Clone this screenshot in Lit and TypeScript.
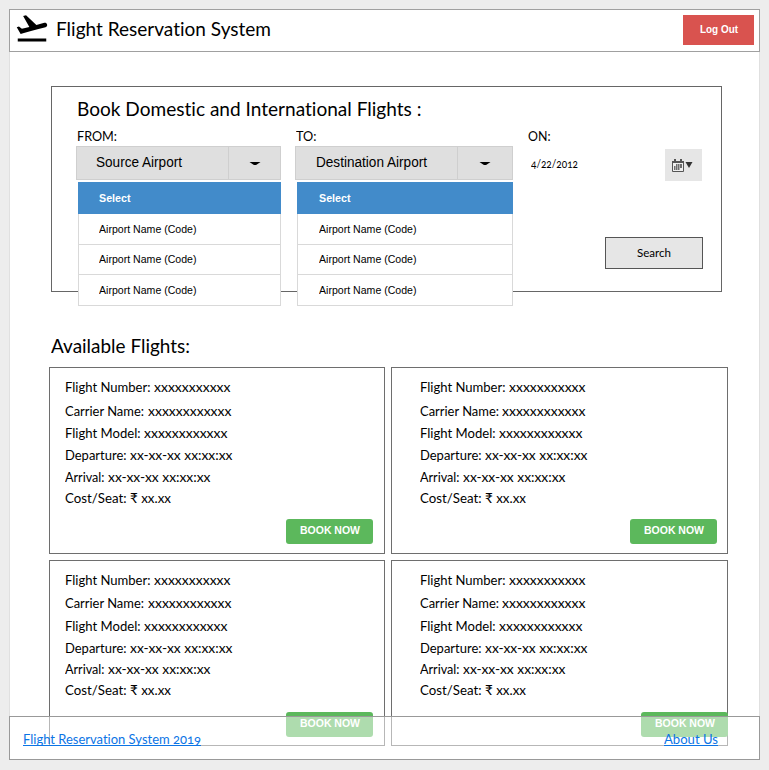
import { LitElement, html, css } from "lit";
import { customElement, property, query } from "lit/decorators.js";

/** A single line of text, condensed or widened to a set width. */
@customElement("fit-text")
class FitText extends LitElement {
  @property({ type: Number }) w = 0;
  @query(".t") span!: HTMLElement;
  static styles = css`
    :host { display: block; white-space: pre; flex: none; }
    .t { display: inline-block; transform-origin: 0 50%; vertical-align: top; }
  `;
  updated() {
    this.style.width = this.w + "px";
    const natural = this.span.getBoundingClientRect().width;
    if (natural) this.span.style.transform = `scaleX(${this.w / natural})`;
  }
  render() {
    return html`<span class="t"><slot></slot></span>`;
  }
}

@customElement("airport-select")
class AirportSelect extends LitElement {
  @property() label = "";
  @property({ type: Number }) labelWidth = 0;
  static styles = css`
    :host { display: block; position: relative; font-family: "Liberation Sans", Arial, sans-serif; }
    .box { display: flex; height: 34px; box-sizing: border-box; background: #dfdfdf; border: 1px solid #cfcfcf; }
    .label { flex: 1; font-size: 14px; line-height: 30px; padding-left: var(--label-pad, 19px); }
    .arrow { width: var(--arrow, 51px); border-left: 1px solid #cfcfcf; display: flex; align-items: center; justify-content: center; }
    .menu { position: absolute; left: 2px; right: 0; top: 36px; z-index: 2; font-size: 11px; }
    .opt { box-sizing: border-box; height: 31px; line-height: 30px; background: #fff; border: 1px solid #d9d9d9; border-top: 0; padding-left: var(--opt-pad, 19.500px); }
    .opt.second { height: 30px; line-height: 29px; }
    .opt.sel { height: 32px; line-height: 32px; background: #428bca; color: #fff; font-weight: bold; border-color: #428bca; border-bottom: 0; }
  `;
  render() {
    return html`
      <div class="box">
        <div class="label"><fit-text .w=${this.labelWidth}>${this.label}</fit-text></div>
        <div class="arrow"><svg width="12" height="5" viewBox="0 0 12 5"><path d="M0.5 1H11.5L7.5 3.700Q6 4.500 4.500 3.700Z" /></svg></div>
      </div>
      <div class="menu">
        <div class="opt sel"><fit-text .w=${31.5}>Select</fit-text></div>
        <div class="opt"><fit-text .w=${97.5}>Airport Name (Code)</fit-text></div>
        <div class="opt second"><fit-text .w=${97.5}>Airport Name (Code)</fit-text></div>
        <div class="opt"><fit-text .w=${97.5}>Airport Name (Code)</fit-text></div>
      </div>`;
  }
}

const details: [string, number, string, number][] = [
  ["Flight Number:", 85.5, "xxxxxxxxxxx", 76.5],
  ["Carrier Name:", 79, "xxxxxxxxxxxx", 83.5],
  ["Flight Model:", 75.5, "xxxxxxxxxxxx", 83.5],
  ["Departure:", 61.5, "xx-xx-xx xx:xx:xx", 102.5],
  ["Arrival:", 39.5, "xx-xx-xx xx:xx:xx", 102.5],
  ["Cost/Seat:", 61.5, "₹ xx.xx", 41],
];

@customElement("flight-card")
class FlightCard extends LitElement {
  static styles = css`
    :host { display: flex; flex-direction: column; box-sizing: border-box; height: 187px; border: 1px solid #6e6e6e; padding: 9px 11px 9px 15px; background: #fff; font-size: 14px; line-height: 20px; }
    .rows { display: grid; grid-template-rows: var(--rows, 24px 22px 22px 22px 21px 20px); }
    .row { display: flex; gap: 3.500px; }
    .book { align-self: flex-end; margin-top: auto; margin-right: var(--book-shift, 0px); width: 87px; height: 25px; background: #5cb85c; border: 0; border-radius: 3px; padding: 0 0 2px 14px; box-sizing: border-box; color: #fff; font: bold 11px/23px "Liberation Sans", Arial, sans-serif; text-align: left; display: block; }
  `;
  render() {
    return html`
      <div class="rows">
        ${details.map(([k, kw, v, vw]) => html`
          <div class="row"><fit-text .w=${kw}>${k}</fit-text><fit-text .w=${vw}>${v}</fit-text></div>`)}
      </div>
      <button class="book"><fit-text .w=${60}>BOOK NOW</fit-text></button>`;
  }
}

@customElement("app-root")
class AppRoot extends LitElement {
  static styles = css`
    :host { display: block; box-sizing: border-box; height: 770px; padding: 9px; background: #ededed; color: #000; font-family: Lato, "Noto Sans", sans-serif; font-variant-ligatures: none; overflow: hidden; }
    .sheet { position: relative; width: 751px; height: 751px; background: #fff; box-shadow: inset 0 0 0 1px #e0e0e0; }
    header { display: flex; height: 43px; box-sizing: border-box; border: 1px solid #a0a0a0; background: #fff; padding: 0 5px 0 4px; align-items: flex-start; }
    .title { font-size: 20px; line-height: 24px; margin: 6px 0 0 5.500px; }
    .plane { display: block; width: 36px; height: 36px; }
    .logout { margin: 5px 0 0 auto; width: 71px; height: 30px; box-sizing: border-box; border: 0; background: #d9534f; color: #fff; font: bold 11px/28px "Liberation Sans", Arial, sans-serif; padding: 0 0 2px 16.500px; text-align: left; }
    .panel { box-sizing: border-box; margin: 34px 0 0 42px; width: 671px; height: 206px; border: 1px solid #666; padding: 9px 19px 22px 24px; display: flex; flex-direction: column; }
    .h { font-size: 20px; line-height: 24px; }
    .book { margin-left: 0.500px; }
    .fields { display: grid; grid-template-columns: 205px 218px 1fr; column-gap: 14px; margin-top: 6px; }
    .cap { font-size: 14px; line-height: 20px; margin-left: 0.700px; }
    .to { --label-pad: 20px; --arrow: 54px; --opt-pad: 21px; }
    .date { display: flex; justify-content: space-between; font-size: 11px; line-height: 30px; font-variant-numeric: oldstyle-nums; padding: 3px 0 0 4px; }
    .cal { width: 37px; height: 32px; background: #e6e6e6; border: 0; padding: 0 0 0 7px; display: flex; align-items: center; gap: 1px; }
    .search { align-self: flex-end; margin: auto -1px 0 0; width: 98px; height: 32px; box-sizing: border-box; border: 1px solid #555; background: #e6e6e6; padding: 0 0 0 31px; font: 12px/28px Lato, "Noto Sans", sans-serif; text-align: left; }
    .avail { margin: 41px 0 0 42px; }
    .cards { display: grid; grid-template-columns: 336px 337px; gap: 6px; margin: 10px 0 0 40px; }
    .right { padding-left: 27.500px; padding-right: 10px; }
    .low { --rows: 23px 23px 22px 21px 21px 20px; height: 186px; padding-bottom: 8px; }
    .low.right { --book-shift: -10.500px; }
    footer { position: absolute; left: 0; right: 0; bottom: 0; height: 44px; box-sizing: border-box; border: 1px solid #999; background: rgba(255, 255, 255, 0.5); display: flex; justify-content: space-between; padding: 12px 41px 0 13px; font-size: 14px; line-height: 20px; font-variant-numeric: oldstyle-nums; }
    a { color: #0b74e5; text-decoration: none; height: 16px; border-bottom: 1px solid #0b74e5; }
  `;
  render() {
    return html`
      <div class="sheet">
        <header>
          <svg class="plane" viewBox="0 0 24 24"><path d="M2.5 19h19v2h-19zm19.57-9.360c-.21-.8-1.040-1.280-1.840-1.060L14.920 10l-6.900-6.430-1.930.51 4.140 7.170-4.970 1.330-1.970-1.540-1.450.39 1.820 3.160.77 1.330 1.600-.43 5.310-1.420 4.350-1.160L21 11.490c.81-.23 1.280-1.050 1.070-1.850z" /></svg>
          <fit-text class="title" .w=${215}>Flight Reservation System</fit-text>
          <button class="logout"><fit-text .w=${38}>Log Out</fit-text></button>
        </header>
        <section class="panel">
          <fit-text class="h book" .w=${344.5}>Book Domestic and International Flights :</fit-text>
          <div class="fields">
            <div>
              <fit-text class="cap" .w=${40}>FROM:</fit-text>
              <airport-select label="Source Airport" .labelWidth=${86}></airport-select>
            </div>
            <div>
              <fit-text class="cap" .w=${20.5}>TO:</fit-text>
              <airport-select class="to" label="Destination Airport" .labelWidth=${111}></airport-select>
            </div>
            <div>
              <fit-text class="cap" .w=${22.5}>ON:</fit-text>
              <div class="date">
                <fit-text .w=${47}>4/22/2012</fit-text>
                <button class="cal">
                  <svg width="12" height="13" viewBox="0 0 12 13"><path d="M.5 2.500h11v10H.5z" fill="#eee" stroke="#555" /><path d="M0 2h12v2H0zM2 0h2v3H2zM8 0h2v3H8z" fill="#555" /><path d="M4 6h1.500M6 6h1.500M8 6h2M2 8h1.500M4 8h1.500M6 8h1.500M8 8h2M2 10h1.500M4 10h1.500M6 10h1.500" stroke="#444" stroke-width="1.300" /></svg>
                  <svg width="8" height="13" viewBox="0 0 8 13"><path d="M0.500 3h7L4 9z" fill="#333" /></svg>
                </button>
              </div>
            </div>
          </div>
          <button class="search"><fit-text .w=${34}>Search</fit-text></button>
        </section>
        <fit-text class="h avail" .w=${139}>Available Flights:</fit-text>
        <div class="cards">
          <flight-card></flight-card>
          <flight-card class="right"></flight-card>
          <flight-card class="low"></flight-card>
          <flight-card class="low right"></flight-card>
        </div>
        <footer>
          <a><fit-text .w=${178}>Flight Reservation System 2019</fit-text></a>
          <a><fit-text .w=${54}>About Us</fit-text></a>
        </footer>
      </div>`;
  }
}
